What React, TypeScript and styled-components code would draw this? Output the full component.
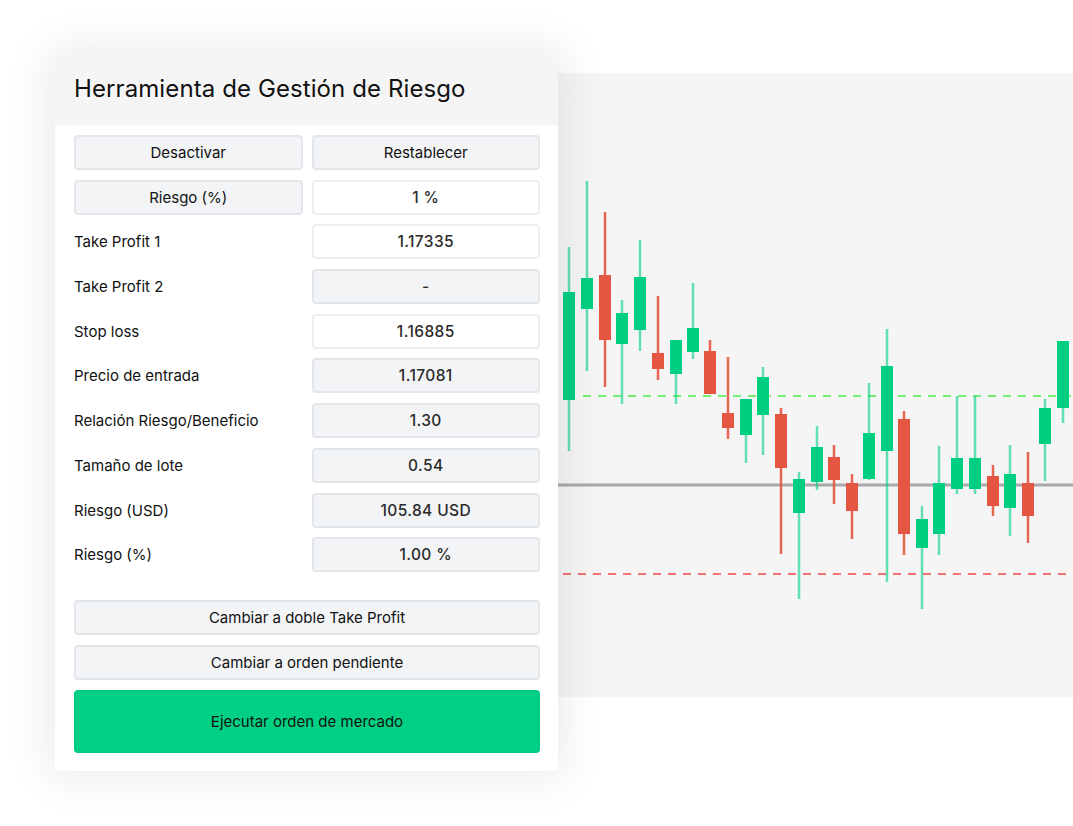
import React from "react";
import styled, { createGlobalStyle } from "styled-components";

const GlobalStyle = createGlobalStyle`
  html, body {
    margin: 0;
    padding: 0;
    background: #ffffff;
    font-family: Inter, "Noto Sans", sans-serif;
    color: #111111;
  }
`;

const Page = styled.div`
  width: 1073px;
  height: 826px;
  overflow: hidden;
  display: flex;
  align-items: flex-start;
  padding: 55px 0 0 55px;
  box-sizing: border-box;
`;

const Card = styled.div`
  position: relative;
  z-index: 2;
  width: 503px;
  flex: none;
  background: #ffffff;
  border-radius: 3px;
  box-shadow: 0 0 44px 8px rgba(0, 0, 0, 0.08);
  overflow: hidden;
`;

const Header = styled.div`
  height: 70px;
  background: #f5f5f5;
  display: flex;
  align-items: center;
  padding: 0 19px;
  box-sizing: border-box;
`;

const Title = styled.h1`
  margin: 0;
  font-size: 24px;
  font-weight: 400;
  letter-spacing: 0.1px;
  padding-bottom: 3px;
`;

const Body = styled.div`
  padding: 10px 18px 18px 19px;
  display: flex;
  flex-direction: column;
`;

const Grid = styled.div`
  display: grid;
  grid-template-columns: 1fr 1fr;
  column-gap: 9px;
  row-gap: 9.7px;
`;

const Box = styled.div<{ $variant: "button" | "input" | "readonly" }>`
  height: 35px;
  box-sizing: border-box;
  border-radius: 4px;
  border: 2px solid ${(p) => (p.$variant === "input" ? "#eceef1" : "#e3e6ea")};
  background: ${(p) => (p.$variant === "input" ? "#ffffff" : "#f3f4f6")};
  display: flex;
  align-items: center;
  justify-content: center;
  font-size: ${(p) => (p.$variant === "button" ? "15px" : "15.5px")};
  font-weight: ${(p) => (p.$variant === "button" ? 400 : 500)};
  letter-spacing: ${(p) => (p.$variant === "button" ? "0" : "0.4px")};
  color: ${(p) => (p.$variant === "button" ? "#111111" : "#2a2a2a")};
`;

const Label = styled.div`
  height: 35px;
  display: flex;
  align-items: center;
  font-size: 15px;
`;

const Actions = styled.div`
  margin-top: 28px;
  display: flex;
  flex-direction: column;
  gap: 10px;
`;

const WideButton = styled.div<{ $primary?: boolean }>`
  height: ${(p) => (p.$primary ? "63px" : "35px")};
  box-sizing: border-box;
  border-radius: 4px;
  border: 2px solid ${(p) => (p.$primary ? "#00cd83" : "#e3e6ea")};
  background: ${(p) => (p.$primary ? "#00d084" : "#f3f4f6")};
  display: flex;
  align-items: center;
  justify-content: center;
  font-size: 15px;
  color: #111111;
`;

const ChartPanel = styled.div`
  flex: 1;
  margin-top: 18px;
  height: 624px;
  background: #f5f5f5;
  position: relative;
  z-index: 1;
`;

type Candle = { x: number; hi: number; lo: number; top: number; bot: number; up: boolean };

const candles: Candle[] = [
  { x: 569, hi: 247, lo: 451, top: 292, bot: 400, up: true },
  { x: 587, hi: 181, lo: 371, top: 278, bot: 309, up: true },
  { x: 605, hi: 212, lo: 387, top: 275, bot: 340, up: false },
  { x: 622, hi: 300, lo: 404, top: 313, bot: 344, up: true },
  { x: 640, hi: 240, lo: 351, top: 277, bot: 330, up: true },
  { x: 658, hi: 296, lo: 380, top: 353, bot: 369, up: false },
  { x: 676, hi: 340, lo: 404, top: 340, bot: 374, up: true },
  { x: 693, hi: 283, lo: 359, top: 328, bot: 352, up: true },
  { x: 710, hi: 340, lo: 394, top: 351, bot: 394, up: false },
  { x: 728, hi: 357, lo: 439, top: 413, bot: 428, up: false },
  { x: 746, hi: 399, lo: 463, top: 399, bot: 435, up: true },
  { x: 763, hi: 367, lo: 455, top: 377, bot: 415, up: true },
  { x: 781, hi: 408, lo: 554, top: 414, bot: 468, up: false },
  { x: 799, hi: 472, lo: 599, top: 479, bot: 513, up: true },
  { x: 817, hi: 426, lo: 490, top: 447, bot: 482, up: true },
  { x: 834, hi: 445, lo: 504, top: 457, bot: 480, up: false },
  { x: 852, hi: 474, lo: 539, top: 483, bot: 511, up: false },
  { x: 869, hi: 383, lo: 480, top: 433, bot: 479, up: true },
  { x: 887, hi: 329, lo: 582, top: 366, bot: 451, up: true },
  { x: 904, hi: 411, lo: 555, top: 419, bot: 534, up: false },
  { x: 922, hi: 506, lo: 609, top: 519, bot: 548, up: true },
  { x: 939, hi: 446, lo: 555, top: 483, bot: 534, up: true },
  { x: 957, hi: 396, lo: 494, top: 458, bot: 489, up: true },
  { x: 975, hi: 396, lo: 494, top: 458, bot: 489, up: true },
  { x: 993, hi: 465, lo: 516, top: 476, bot: 506, up: false },
  { x: 1010, hi: 445, lo: 536, top: 474, bot: 508, up: true },
  { x: 1028, hi: 452, lo: 543, top: 483, bot: 516, up: false },
  { x: 1045, hi: 399, lo: 481, top: 408, bot: 444, up: true },
  { x: 1063, hi: 341, lo: 423, top: 341, bot: 408, up: true },
];

const OX = 558;
const OY = 73;
const GREEN = "#00cf82";
const RED = "#e45641";

const Chart = () => (
  <svg width="100%" height="624" viewBox="0 0 515 624" style={{ display: "block" }}>
    <line x1="0" y1="412" x2="515" y2="412" stroke="#a9a9a9" strokeWidth="3" />
    <line x1="25" y1="323" x2="515" y2="323" stroke="#74ee74" strokeWidth="2" strokeDasharray="8 7" />
    <line x1="5" y1="501" x2="515" y2="501" stroke="#f07272" strokeWidth="2" strokeDasharray="8 7" />
    {candles.map((c, i) => {
      const x = c.x - OX;
      const color = c.up ? GREEN : RED;
      return (
        <g key={i}>
          <line
            x1={x}
            x2={x}
            y1={c.hi - OY}
            y2={c.lo - OY}
            stroke={color}
            strokeOpacity={c.up ? 0.6 : 0.9}
            strokeWidth="2.5"
          />
          <rect x={x - 6} y={c.top - OY} width="12" height={c.bot - c.top} fill={color} />
        </g>
      );
    })}
  </svg>
);

const rows: { label: string; value: string; editable?: boolean }[] = [
  { label: "Take Profit 1", value: "1.17335", editable: true },
  { label: "Take Profit 2", value: "-" },
  { label: "Stop loss", value: "1.16885", editable: true },
  { label: "Precio de entrada", value: "1.17081" },
  { label: "Relación Riesgo/Beneficio", value: "1.30" },
  { label: "Tamaño de lote", value: "0.54" },
  { label: "Riesgo (USD)", value: "105.84 USD" },
  { label: "Riesgo (%)", value: "1.00 %" },
];

export default function App() {
  return (
    <>
      <GlobalStyle />
      <Page>
        <Card>
          <Header>
            <Title>Herramienta de Gestión de Riesgo</Title>
          </Header>
          <Body>
            <Grid>
              <Box $variant="button">Desactivar</Box>
              <Box $variant="button">Restablecer</Box>
              <Box $variant="button">Riesgo (%)</Box>
              <Box $variant="input">1 %</Box>
              {rows.map((r) => (
                <React.Fragment key={r.label}>
                  <Label>{r.label}</Label>
                  <Box $variant={r.editable ? "input" : "readonly"}>{r.value}</Box>
                </React.Fragment>
              ))}
            </Grid>
            <Actions>
              <WideButton>Cambiar a doble Take Profit</WideButton>
              <WideButton>Cambiar a orden pendiente</WideButton>
              <WideButton $primary>Ejecutar orden de mercado</WideButton>
            </Actions>
          </Body>
        </Card>
        <ChartPanel>
          <Chart />
        </ChartPanel>
      </Page>
    </>
  );
}
